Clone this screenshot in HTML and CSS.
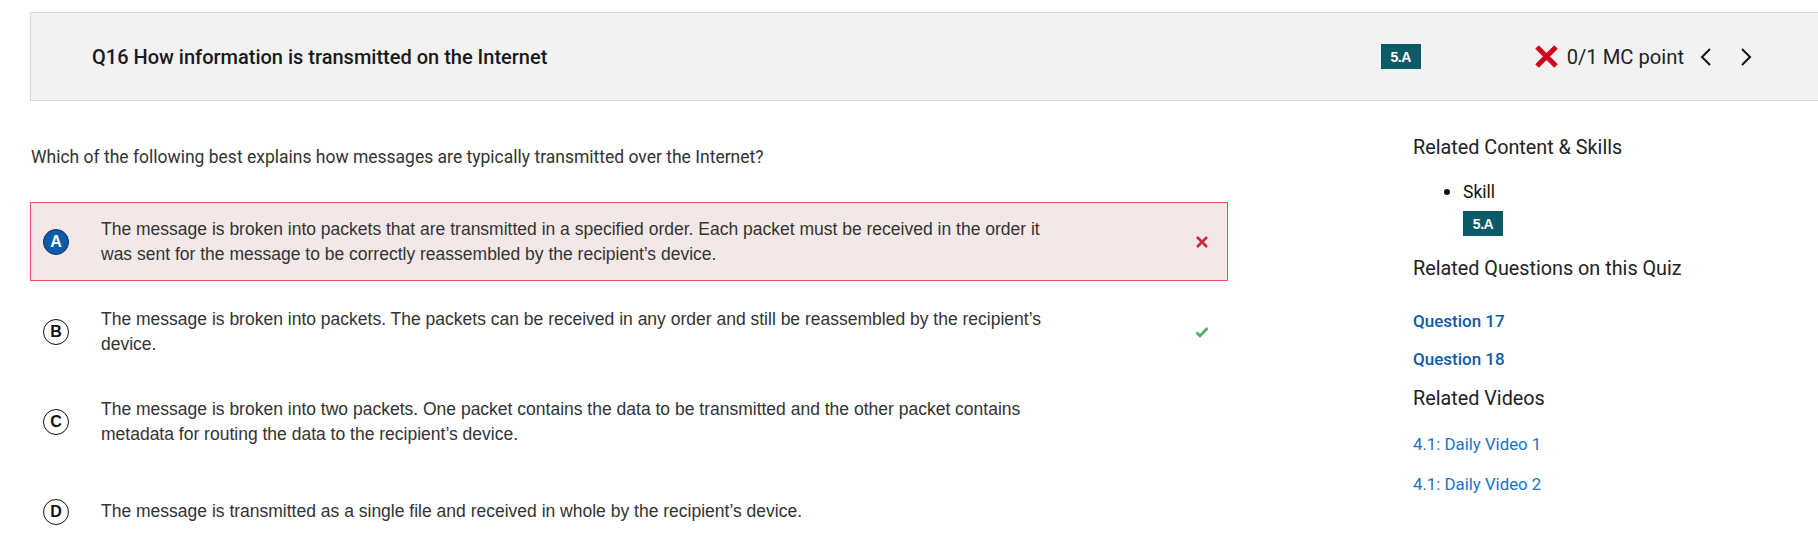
FILE: index.html
```html
<!DOCTYPE html>
<html lang="en">
<head>
<meta charset="utf-8">
<title>Q16</title>
<link rel="stylesheet" href="styles.css">
</head>
<body>
<header class="qhead">
  <h1 class="qtitle">Q16 How information is transmitted on the Internet</h1>
  <span class="badge">5.A</span>
  <div class="score">
    <svg class="score-x" width="25" height="25" viewBox="0 0 25 25"><path d="M3 3 L22 22 M22 3 L3 22" stroke="#d0021b" stroke-width="5" fill="none"/></svg>
    <span class="score-text">0/1 MC point</span>
  </div>
  <div class="nav">
    <svg class="chev" width="12" height="20" viewBox="0 0 12 20"><path d="M10 2 L2 10 L10 18" stroke="#111" stroke-width="2" fill="none"/></svg>
    <svg class="chev" width="12" height="20" viewBox="0 0 12 20"><path d="M2 2 L10 10 L2 18" stroke="#111" stroke-width="2" fill="none"/></svg>
  </div>
</header>

<main class="main">
  <section class="question">
    <p class="prompt">Which of the following best explains how messages are typically transmitted over the Internet?</p>
    <div class="options">
      <div class="option wrong">
        <span class="letter selected">A</span>
        <p class="otext">The message is broken into packets that are transmitted in a specified order. Each packet must be received in the order it was sent for the message to be correctly reassembled by the recipient’s device.</p>
        <span class="mark">
          <svg width="14" height="14" viewBox="0 0 14 14"><path d="M2 2 L12 12 M12 2 L2 12" stroke="#c8283c" stroke-width="2.6" fill="none"/></svg>
        </span>
      </div>
      <div class="option">
        <span class="letter">B</span>
        <p class="otext">The message is broken into packets. The packets can be received in any order and still be reassembled by the recipient’s device.</p>
        <span class="mark">
          <svg width="14" height="12" viewBox="0 0 14 12"><path d="M1.5 6.5 L5 10 L12.5 2" stroke="#4caf50" stroke-width="2.6" fill="none"/></svg>
        </span>
      </div>
      <div class="option">
        <span class="letter">C</span>
        <p class="otext">The message is broken into two packets. One packet contains the data to be transmitted and the other packet contains metadata for routing the data to the recipient’s device.</p>
      </div>
      <div class="option">
        <span class="letter">D</span>
        <p class="otext">The message is transmitted as a single file and received in whole by the recipient’s device.</p>
      </div>
    </div>
  </section>

  <aside class="side">
    <h2 class="side-h">Related Content &amp; Skills</h2>
    <ul class="skills">
      <li>Skill
        <span class="badge small">5.A</span>
      </li>
    </ul>
    <h2 class="side-h rq">Related Questions on this Quiz</h2>
    <a class="qlink first" href="#">Question 17</a>
    <a class="qlink" href="#">Question 18</a>
    <h2 class="side-h rv">Related Videos</h2>
    <a class="vlink first" href="#">4.1: Daily Video 1</a>
    <a class="vlink" href="#">4.1: Daily Video 2</a>
  </aside>
</main>
</body>
</html>
```

FILE: styles.css
```css
* { box-sizing: border-box; }

body {
  margin: 0;
  background: #fff;
  font-family: Roboto, "Liberation Sans", Arial, sans-serif;
  color: #222;
  overflow: hidden;
}

.qhead {
  margin: 12px 0 0 30px;
  height: 89px;
  background: #f2f2f2;
  border: 1px solid #d6d6d6;
  border-right: none;
  display: flex;
  align-items: center;
  padding: 0 66px 0 61px;
}

.qtitle {
  flex: 1;
  margin: 0;
  font-size: 20px;
  font-weight: 500;
  color: #1a1a1a;
}

.badge {
  display: inline-flex;
  align-items: center;
  justify-content: center;
  width: 40px;
  height: 25px;
  background: #0c5a66;
  color: #fff;
  font-family: "Liberation Sans", Arial, sans-serif;
  font-weight: 700;
  font-size: 14px;
  letter-spacing: -0.5px;
}

.score {
  display: flex;
  align-items: center;
  margin-left: 113px;
}

.score-x { display: block; }

.score-text {
  margin-left: 8px;
  font-size: 20.2px;
  color: #222;
}

.nav {
  display: flex;
  align-items: center;
  gap: 28px;
  margin-left: 16px;
}

.chev { display: block; }

.main {
  display: flex;
  padding: 35px 0 0 30px;
}

.question {
  width: 1198px;
  flex: none;
}

.prompt {
  margin: 9px 0 0 1px;
  font-size: 17.5px;
  line-height: 24px;
  color: #333;
}

.options {
  margin-top: 33px;
  display: flex;
  flex-direction: column;
  gap: 11px;
}

.option {
  display: flex;
  align-items: center;
  min-height: 79px;
  border: 1px solid transparent;
  padding: 0 18px 0 12px;
}

.option.wrong {
  background: #f3e8e8;
  border-color: #e05366;
}

.letter {
  flex: none;
  width: 26px;
  height: 26px;
  border-radius: 50%;
  border: 1.6px solid #111;
  background: #fff;
  color: #111;
  display: flex;
  align-items: center;
  justify-content: center;
  font-family: "Liberation Sans", Arial, sans-serif;
  font-weight: 700;
  font-size: 16px;
  margin-right: 32px;
}

.letter.selected {
  background: #0b5cad;
  border-color: #182c4c;
  color: #fff;
}

.otext {
  flex: none;
  width: 960px;
  margin: 0;
  font-family: "Liberation Sans", Arial, sans-serif;
  font-size: 17.5px;
  line-height: 24.5px;
  color: #333;
}

.mark {
  margin-left: auto;
  display: flex;
  align-items: center;
}

.side {
  margin-left: 185px;
  display: flex;
  flex-direction: column;
  align-items: flex-start;
}

.side-h {
  margin: 0;
  font-size: 19.8px;
  font-weight: 400;
  line-height: 24px;
  color: #222;
}

.skills {
  margin: 20px 0 0;
  padding-left: 50px;
  font-size: 17.5px;
  line-height: 24px;
  color: #111;
  list-style: none;
}

.skills li { position: relative; }

.skills li::before {
  content: "";
  position: absolute;
  left: -19px;
  top: 9px;
  width: 6px;
  height: 6px;
  border-radius: 50%;
  background: #111;
}

.badge.small {
  display: flex;
  margin-top: 7px;
}

.side-h.rq { margin-top: 21px; }

.qlink {
  font-size: 17px;
  font-weight: 500;
  line-height: 24px;
  color: #0b5cab;
  text-decoration: none;
  margin-top: 14px;
}
.qlink.first { margin-top: 28px; }

.side-h.rv { margin-top: 16px; }

.vlink {
  font-size: 16.8px;
  line-height: 24px;
  color: #1a73c8;
  text-decoration: none;
  margin-top: 16px;
}
.vlink.first { margin-top: 21px; }
```
